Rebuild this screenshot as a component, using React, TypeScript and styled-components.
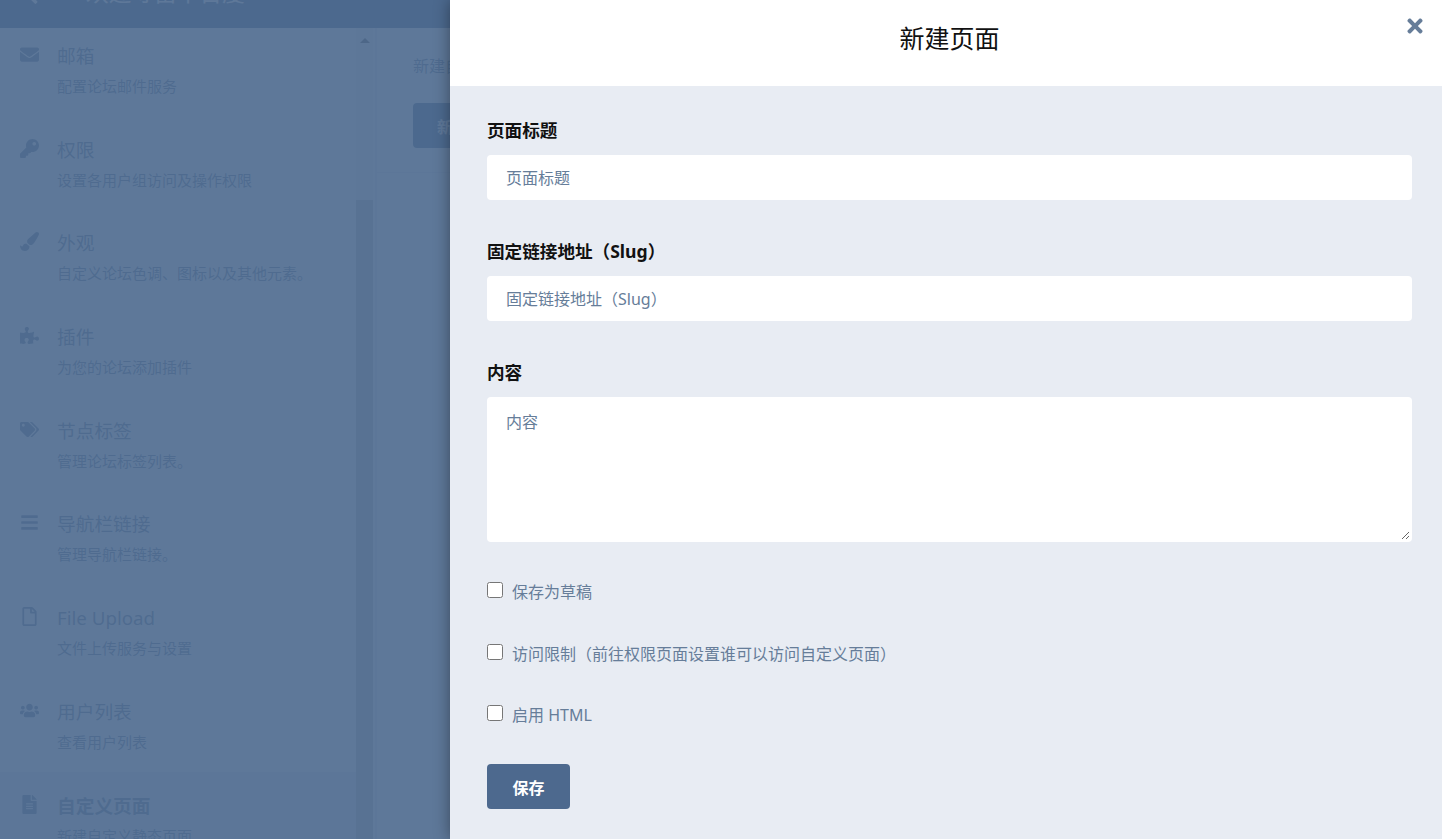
import React from 'react';
import styled, { createGlobalStyle } from 'styled-components';
import {
  FaAngleLeft,
  FaBars,
  FaEnvelope,
  FaFileAlt,
  FaKey,
  FaPaintBrush,
  FaPuzzlePiece,
  FaRegFile,
  FaTags,
  FaTimes,
  FaUsers,
} from 'react-icons/fa';

const GlobalStyle = createGlobalStyle`
  html, body {
    margin: 0;
    padding: 0;
    background: #fff;
  }
  body {
    font-family: "Noto Sans", "Noto Sans CJK SC", sans-serif;
    color: #667d99;
    text-spacing-trim: space-all;
  }
  input, textarea, button {
    text-spacing-trim: space-all;
  }
  * {
    box-sizing: border-box;
  }
`;

const Page = styled.div`
  position: relative;
  width: 1442px;
  height: 839px;
  overflow: hidden;
  display: flex;
  flex-direction: column;
`;

const TopBar = styled.header`
  flex: 0 0 28px;
  background: #4d698e;
  color: #fff;
  display: flex;
  align-items: flex-end;
  padding: 0 0 20px 22px;
  overflow: hidden;
`;

const TopTitle = styled.div`
  font-size: 22.7px;
  line-height: 30px;
  margin-left: 42px;
  white-space: nowrap;
`;

const Columns = styled.div`
  flex: 1;
  display: flex;
  min-height: 0;
`;

const Sidebar = styled.nav`
  flex: 0 0 377px;
  display: flex;
  border-right: 2px solid #e8ecf3;
  overflow: hidden;
`;

const NavList = styled.div`
  flex: 0 0 356px;
  margin-top: -6px;
`;

const NavItem = styled.div<{ $active?: boolean }>`
  height: 93.7px;
  padding: 20px 0 0 19px;
  display: grid;
  grid-template-columns: 20px 1fr;
  column-gap: 18px;
  grid-template-rows: 27px 20px;
  row-gap: 7px;
  background: ${(p) => (p.$active ? '#e8ecf3' : 'transparent')};
`;

const NavIcon = styled.div`
  text-align: center;
  line-height: 27px;
  height: 27px;
  white-space: nowrap;
  svg {
    width: auto;
    height: 19px;
    vertical-align: -3px;
  }
`;

const NavTitle = styled.div<{ $active?: boolean }>`
  font-size: 18.72px;
  line-height: 27px;
  font-weight: ${(p) => (p.$active ? 700 : 400)};
`;

const NavText = styled.div`
  grid-column: 2;
  font-size: 15px;
  line-height: 20px;
  white-space: nowrap;
`;

const ScrollBar = styled.div`
  flex: 0 0 17px;
  background: #f1f1f1;
  display: flex;
  flex-direction: column;
`;

const ScrollArrow = styled.div`
  flex: 0 0 172px;
  padding-top: 10px;
  display: flex;
  justify-content: center;
  &::before {
    content: '';
    width: 0;
    height: 0;
    border-left: 5px solid transparent;
    border-right: 5px solid transparent;
    border-bottom: 5px solid #505050;
  }
`;

const ScrollThumb = styled.div`
  flex: 1;
  background: #c1c1c1;
`;

const Content = styled.main`
  flex: 1;
`;

const ContentHead = styled.div`
  height: 145px;
  padding: 26px 36px 0;
  border-bottom: 1px solid #e8ecf3;
  background: #fff;
`;

const ContentNote = styled.div`
  font-size: 16px;
  line-height: 24px;
  margin-bottom: 25px;
`;

const PrimaryButton = styled.button`
  display: block;
  height: 45px;
  padding: 0 24px;
  border: 0;
  border-radius: 4px;
  background: #4d698e;
  color: #fff;
  font: 700 16px "Noto Sans", "Noto Sans CJK SC", sans-serif;
`;

const Backdrop = styled.div`
  position: absolute;
  inset: 0;
  background: rgba(77, 105, 142, 0.9);
`;

const Modal = styled.section`
  position: absolute;
  top: 0;
  left: 450px;
  width: 999px;
  height: 839px;
  background: #e8ecf3;
  box-shadow: 0 0 15px rgba(0, 0, 0, 0.4);
`;

const CloseButton = styled.div`
  position: absolute;
  top: 15px;
  right: 23px;
  font-size: 22px;
  line-height: 22px;
  color: #667d99;
  svg {
    display: block;
  }
`;

const ModalHead = styled.div`
  height: 86px;
  background: #fff;
  display: flex;
  align-items: center;
  justify-content: center;
  padding-bottom: 12px;
`;

const ModalTitle = styled.h3`
  margin: 0;
  font-size: 25px;
  font-weight: 400;
  color: #111;
`;

const ModalBody = styled.form`
  padding: 33px 37px 0;
`;

const Field = styled.div<{ $last?: boolean }>`
  margin-bottom: ${(p) => (p.$last ? '38.25px' : '40px')};
`;

const FieldLabel = styled.label`
  display: block;
  font-size: 17.6px;
  line-height: 22px;
  font-weight: 700;
  color: #111;
  margin-bottom: 14px;
`;

const TextInput = styled.input`
  display: block;
  width: 100%;
  height: 45px;
  padding: 0 19px;
  border: 0;
  border-radius: 4px;
  background: #fff;
  font: 16px "Noto Sans", "Noto Sans CJK SC", sans-serif;
  color: #667d99;
  &::placeholder {
    color: #667d99;
    opacity: 1;
  }
`;

const TextArea = styled.textarea`
  display: block;
  width: 100%;
  height: 145px;
  padding: 11px 17px;
  border: 2px solid transparent;
  border-radius: 4px;
  background: #fff;
  font: 16px/24px "Noto Sans", "Noto Sans CJK SC", sans-serif;
  color: #667d99;
  &::placeholder {
    color: #667d99;
    opacity: 1;
  }
`;

const CheckRow = styled.label`
  display: flex;
  align-items: flex-start;
  height: 21.25px;
  margin-bottom: 40px;
  font-size: 16px;
  line-height: 24px;
  color: #667d99;
  white-space: nowrap;
`;

const CheckBox = styled.input`
  flex: 0 0 16px;
  width: 16px;
  height: 16px;
  margin: 2px 9px 0 0;
`;

const SubmitButton = styled(PrimaryButton)`
  width: 83px;
  padding: 0;
`;

const navItems = [
  { icon: <FaEnvelope />, title: '邮箱', text: '配置论坛邮件服务' },
  { icon: <FaKey />, title: '权限', text: '设置各用户组访问及操作权限' },
  { icon: <FaPaintBrush />, title: '外观', text: '自定义论坛色调、图标以及其他元素。' },
  { icon: <FaPuzzlePiece />, title: '插件', text: '为您的论坛添加插件' },
  { icon: <FaTags />, title: '节点标签', text: '管理论坛标签列表。' },
  { icon: <FaBars />, title: '导航栏链接', text: '管理导航栏链接。' },
  { icon: <FaRegFile />, title: 'File Upload', text: '文件上传服务与设置' },
  { icon: <FaUsers />, title: '用户列表', text: '查看用户列表' },
  { icon: <FaFileAlt />, title: '自定义页面', text: '新建自定义静态页面', active: true },
];

export default function App() {
  return (
    <Page>
      <GlobalStyle />
      <TopBar>
        <FaAngleLeft size={22} />
        <TopTitle>欢迎寻笛平台度</TopTitle>
      </TopBar>
      <Columns>
        <Sidebar>
          <NavList>
            {navItems.map((item) => (
              <NavItem key={item.title} $active={item.active}>
                <NavIcon>{item.icon}</NavIcon>
                <NavTitle $active={item.active}>{item.title}</NavTitle>
                <NavText>{item.text}</NavText>
              </NavItem>
            ))}
          </NavList>
          <ScrollBar>
            <ScrollArrow />
            <ScrollThumb />
          </ScrollBar>
        </Sidebar>
        <Content>
          <ContentHead>
            <ContentNote>新建自定义页面</ContentNote>
            <PrimaryButton type="button">新建页面</PrimaryButton>
          </ContentHead>
        </Content>
      </Columns>
      <Backdrop />
      <Modal>
        <CloseButton>
          <FaTimes />
        </CloseButton>
        <ModalHead>
          <ModalTitle>新建页面</ModalTitle>
        </ModalHead>
        <ModalBody>
          <Field>
            <FieldLabel>页面标题</FieldLabel>
            <TextInput placeholder="页面标题" />
          </Field>
          <Field>
            <FieldLabel>固定链接地址（Slug）</FieldLabel>
            <TextInput placeholder="固定链接地址（Slug）" />
          </Field>
          <Field $last>
            <FieldLabel>内容</FieldLabel>
            <TextArea placeholder="内容" />
          </Field>
          <CheckRow>
            <CheckBox type="checkbox" />
            保存为草稿
          </CheckRow>
          <CheckRow>
            <CheckBox type="checkbox" />
            访问限制（前往权限页面设置谁可以访问自定义页面）
          </CheckRow>
          <CheckRow>
            <CheckBox type="checkbox" />
            启用 HTML
          </CheckRow>
          <SubmitButton type="button">保存</SubmitButton>
        </ModalBody>
      </Modal>
    </Page>
  );
}
